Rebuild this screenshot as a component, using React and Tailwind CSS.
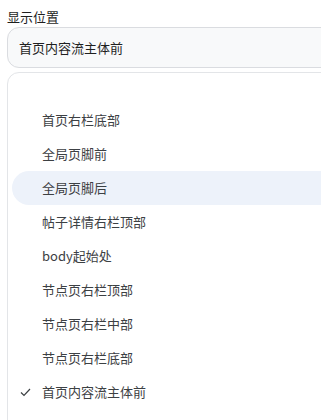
import React from "react";

const items = [
  "首页右栏底部",
  "全局页脚前",
  "全局页脚后",
  "帖子详情右栏顶部",
  "body起始处",
  "节点页右栏顶部",
  "节点页右栏中部",
  "节点页右栏底部",
  "首页内容流主体前",
];

export default function App() {
  return (
    <div
      className="w-[321px] h-[420px] overflow-hidden bg-white pl-[7px] pt-[8px]"
      style={{ fontFamily: '"Noto Sans CJK SC", "Noto Sans", sans-serif' }}
    >
      <div className="text-[13px] leading-[18px] text-[#1f1f1f]">显示位置</div>
      <div className="mt-[1px] w-[340px] h-[41px] rounded-[12px] border border-[#dadce0] bg-[#f8f9fa] flex items-center pl-[11px] text-[13px] text-[#1f1f1f]">
        首页内容流主体前
      </div>
      <div className="mt-[4px] w-[340px] h-[400px] rounded-[12px] border border-[#e3e5e8] bg-white pt-[30px]">
        {items.map((t, i) => (
          <div
            key={i}
            className={
              "ml-[4px] h-[34px] flex items-center text-[13px] text-[#3c4043] rounded-l-[17px] " +
              (i === 2 ? "bg-[#edf2fa]" : "")
            }
          >
            <div className="w-[30px] flex justify-start pl-[8px]">
              {i === 8 ? (
                <svg width="11" height="9" viewBox="0 0 11 9" fill="none">
                  <path d="M1 4.5L4 7.5L10 1" stroke="#3c4043" strokeWidth="1.2" />
                </svg>
              ) : null}
            </div>
            <span>{t}</span>
          </div>
        ))}
      </div>
    </div>
  );
}
